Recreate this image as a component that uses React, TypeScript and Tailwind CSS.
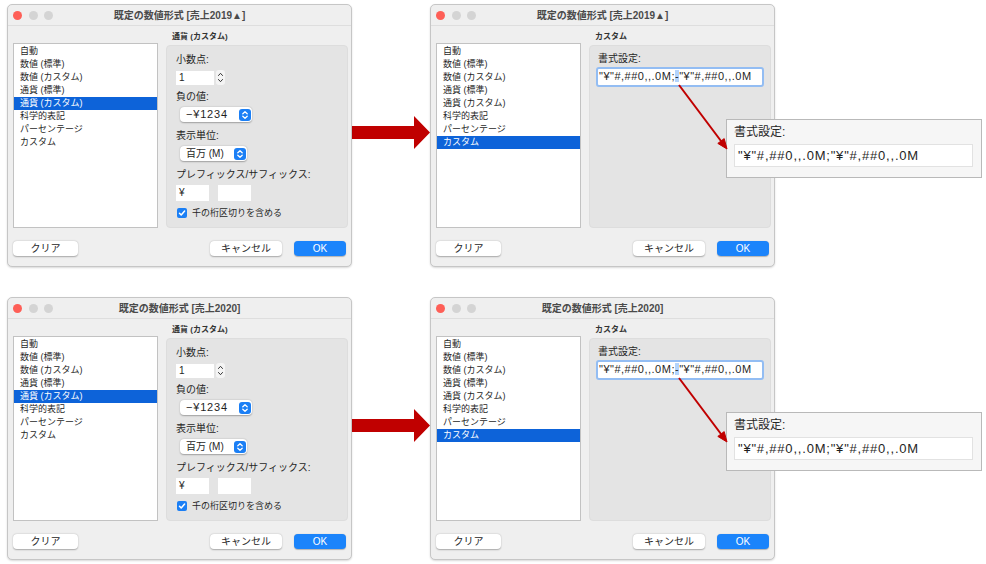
import React from 'react';

const formatItems = [
  '自動',
  '数値 (標準)',
  '数値 (カスタム)',
  '通貨 (標準)',
  '通貨 (カスタム)',
  '科学的表記',
  'パーセンテージ',
  'カスタム',
];

function TitleBar({ title }: { title: string }) {
  return (
    <div className="relative flex h-[21px] flex-none items-center gap-[6.5px] border-b border-[#dedede] pl-[5px]">
      <span className="h-[9px] w-[9px] rounded-full bg-[#fe5f57]" />
      <span className="h-[9px] w-[9px] rounded-full bg-[#d4d4d4]" />
      <span className="h-[9px] w-[9px] rounded-full bg-[#d4d4d4]" />
      <div className="absolute inset-0 flex items-center justify-center text-[10px] font-semibold text-[#4a4a4a]">
        {title}
      </div>
    </div>
  );
}

function FormatList({ selected }: { selected: number }) {
  return (
    <div className="mt-[11px] h-[185px] w-[145px] flex-none border border-[#c2c2c2] bg-white pt-px">
      {formatItems.map((item, i) => (
        <div
          key={item}
          className={
            'h-[13px] pl-[6px] text-[9px] leading-[13px] ' +
            (i === selected ? 'bg-[#0d63d9] text-white' : 'text-[#1f1f1f]')
          }
        >
          {item}
        </div>
      ))}
    </div>
  );
}

function Button({ children, primary, className }: { children: React.ReactNode; primary?: boolean; className: string }) {
  return (
    <div
      className={
        'flex h-[15px] items-center justify-center rounded-[4px] text-[10px] ' +
        (primary
          ? 'bg-[#1b84fb] text-white shadow-[0_0.5px_1px_rgba(0,0,0,0.25)] '
          : 'bg-white text-[#262626] shadow-[0_0.5px_1.5px_rgba(0,0,0,0.3)] ') +
        className
      }
    >
      {children}
    </div>
  );
}

function UpDown({ color }: { color: string }) {
  return (
    <svg width="12" height="12" viewBox="0 0 12 12" fill="none" stroke={color} strokeWidth="1.3" strokeLinecap="round" strokeLinejoin="round">
      <path d="M3.8 4.8 L6 2.8 L8.2 4.8" />
      <path d="M3.8 7.2 L6 9.2 L8.2 7.2" />
    </svg>
  );
}

function Popup({ value, width, text }: { value: string; width: string; text: string }) {
  return (
    <div className={'ml-[4px] mt-[4px] flex h-[15px] items-center justify-between rounded-[4px] bg-white pl-[6px] pr-[1px] shadow-[0_0.5px_1.5px_rgba(0,0,0,0.3)] ' + width}>
      <span className={'leading-[15px] text-[#1f1f1f] ' + text}>{value}</span>
      <span className="flex h-[12px] w-[12px] items-center justify-center rounded-[3px] bg-[#1b7ff5]">
        <UpDown color="#ffffff" />
      </span>
    </div>
  );
}

function CurrencyOptions() {
  return (
    <div className="px-[9px] pt-[8px] text-[10px] text-[#262626]">
      <div className="leading-[12px]">小数点:</div>
      <div className="mt-[4px] flex items-center gap-[2px]">
        <div className="h-[14px] w-[38px] bg-white pl-[3px] text-[10px] leading-[14px]">1</div>
        <div className="flex h-[15px] w-[9px] flex-col items-center justify-center rounded-[3px] bg-[#f4f4f4]">
          <svg width="9" height="15" viewBox="0 0 9 15" fill="none" stroke="#333" strokeWidth="1" strokeLinecap="round" strokeLinejoin="round">
            <path d="M2.5 5.5 L4.5 3.3 L6.5 5.5" />
            <path d="M2.5 9.5 L4.5 11.7 L6.5 9.5" />
          </svg>
        </div>
      </div>
      <div className="mt-[6px] leading-[12px]">負の値:</div>
      <Popup value="−¥1234" width="w-[72px]" text="text-[11px] tracking-[0.8px]" />
      <div className="mt-[8px] leading-[12px]">表示単位:</div>
      <Popup value="百万 (M)" width="w-[67px]" text="text-[10px]" />
      <div className="mt-[8px] leading-[12px]">プレフィックス/サフィックス:</div>
      <div className="mt-[4px] flex gap-[9px]">
        <div className="h-[16px] w-[33px] bg-white pl-[3px] text-[10px] leading-[16px]">¥</div>
        <div className="h-[16px] w-[33px] bg-white" />
      </div>
      <div className="mt-[6px] flex h-[12px] items-center gap-[5px] pl-[1px]">
        <span className="flex h-[10px] w-[10px] items-center justify-center rounded-[2px] bg-[#1b7ff5]">
          <svg width="10" height="10" viewBox="0 0 10 10" fill="none" stroke="#fff" strokeWidth="1.5" strokeLinecap="round" strokeLinejoin="round">
            <path d="M2.5 5.2 L4.2 7 L7.6 3.1" />
          </svg>
        </span>
        <span className="text-[9px] leading-[12px]">千の桁区切りを含める</span>
      </div>
    </div>
  );
}

function CustomOptions() {
  return (
    <div className="px-[6px] pt-[7px] text-[#262626]">
      <div className="pl-[2px] text-[10px] leading-[12px]">書式設定:</div>
      <div className="mt-[2px] h-[20px] w-[168px] rounded-[3px] border-[2.5px] border-[#93bdf3] bg-white pl-px text-[11px] leading-[15px] tracking-[0.5px] text-[#1f1f1f]">
        "¥"#,##0,,.0M;<span className="bg-[#b3d4fc]">-</span>"¥"#,##0,,.0M
      </div>
    </div>
  );
}

function Dialog({
  title,
  selected,
  header,
  children,
  overlay,
}: {
  title: string;
  selected: number;
  header: string;
  children: React.ReactNode;
  overlay?: React.ReactNode;
}) {
  return (
    <div className="relative flex h-[263px] w-[345px] flex-none flex-col rounded-[5px] border border-[#c6c6c6] bg-[#efefef] shadow-[0_1px_2px_rgba(0,0,0,0.15)]">
      <TitleBar title={title} />
      <div className="flex px-[5px] pt-[6px]">
        <FormatList selected={selected} />
        <div className="ml-[8px] w-[182px] flex-none">
          <div className="h-[13px] pl-[6px] text-[8px] font-semibold leading-[9px] text-[#333]">{header}</div>
          <div className="h-[183px] rounded-[4px] border border-[#dddddd] bg-[#e4e4e4]">{children}</div>
        </div>
      </div>
      <div className="mt-[13px] flex px-[5px]">
        <Button className="w-[65px]">クリア</Button>
        <div className="ml-auto flex gap-[12px]">
          <Button className="w-[72px]">キャンセル</Button>
          <Button primary className="w-[52px]">OK</Button>
        </div>
      </div>
      {overlay}
    </div>
  );
}

// zoomed copy of the format field plus the red pointer leading to it
function FormatCallout() {
  return (
    <>
      <div className="absolute left-[295px] top-[114px] h-[59px] w-[256px] border border-[#b9b9b9] bg-[#f6f6f6] pl-[7px] pr-[8px] pt-[4px]">
        <div className="text-[12px] leading-[16px] text-[#262626]">書式設定:</div>
        <div className="mt-[4px] h-[23px] border border-[#e2e2e2] bg-white pl-[3px] text-[13px] leading-[21px] tracking-[0.8px] text-[#1f1f1f]">
          "¥"#,##0,,.0M;"¥"#,##0,,.0M
        </div>
      </div>
      <svg className="pointer-events-none absolute left-0 top-0 overflow-visible" width="345" height="263">
        <line x1="248" y1="80" x2="290" y2="136" stroke="#c00000" strokeWidth="2" />
        <path d="M296 144 L293.2 133.6 L286.8 138.4 Z" fill="#c00000" stroke="#c00000" strokeWidth="1" />
      </svg>
    </>
  );
}

function BigArrow() {
  return (
    <svg width="78" height="33" viewBox="0 0 78 33" className="mt-[112px] flex-none">
      <path d="M0 10 H62 V0 L78 16.5 L62 33 V23 H0 Z" fill="#c00000" />
    </svg>
  );
}

function Row({ year }: { year: string }) {
  return (
    <div className="flex items-start pl-[7px]">
      <Dialog title={`既定の数値形式 [売上${year}]`} selected={4} header="通貨 (カスタム)">
        <CurrencyOptions />
      </Dialog>
      <BigArrow />
      <Dialog title={`既定の数値形式 [売上${year}]`} selected={7} header="カスタム" overlay={<FormatCallout />}>
        <CustomOptions />
      </Dialog>
    </div>
  );
}

export default function App() {
  return (
    <div className="flex h-[564px] w-[986px] flex-col gap-[30px] overflow-hidden bg-white pt-[4px] [font-family:'Liberation_Sans','Noto_Sans_CJK_JP',sans-serif]">
      <Row year="2019▲" />
      <Row year="2020" />
    </div>
  );
}
